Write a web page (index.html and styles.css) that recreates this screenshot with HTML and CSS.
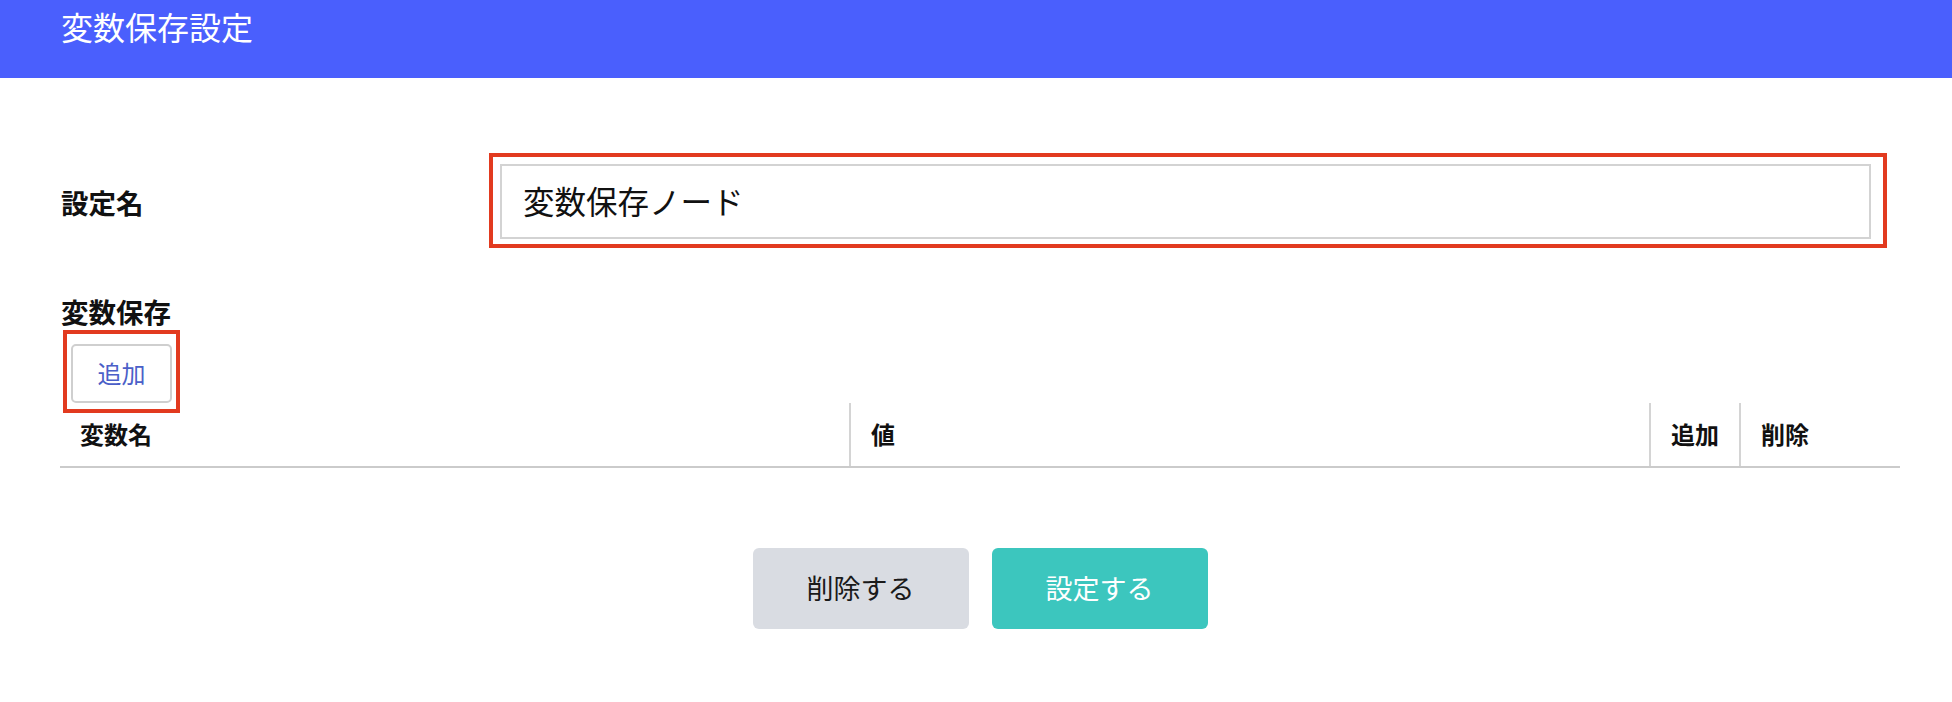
FILE: index.html
```html
<!DOCTYPE html>
<html lang="ja">
<head>
<meta charset="utf-8">
<title>変数保存設定</title>
<link rel="stylesheet" href="styles.css">
</head>
<body>
<header class="topbar">
  <h1 class="topbar-title">変数保存設定</h1>
</header>
<main class="content">
  <div class="field-row">
    <label class="field-label" for="name">設定名</label>
    <div class="annot annot-input">
      <input class="text-input" id="name" type="text" value="変数保存ノード">
    </div>
  </div>
  <h2 class="section-title">変数保存</h2>
  <div class="add-wrap">
    <button class="annot annot-btn add-btn" type="button">追加</button>
  </div>
  <table class="var-table">
    <colgroup>
      <col class="col-name">
      <col class="col-value">
      <col class="col-add">
      <col class="col-del">
    </colgroup>
    <thead>
      <tr>
        <th>変数名</th>
        <th>値</th>
        <th>追加</th>
        <th>削除</th>
      </tr>
    </thead>
    <tbody></tbody>
  </table>
  <div class="actions">
    <button class="btn btn-delete" type="button">削除する</button>
    <button class="btn btn-submit" type="button">設定する</button>
  </div>
</main>
</body>
</html>
```
FILE: styles.css
```css
* { box-sizing: border-box; }

html, body {
  margin: 0;
  padding: 0;
  background: #ffffff;
  font-family: "Noto Sans CJK JP", "Noto Sans", sans-serif;
  color: #111111;
}

.topbar {
  height: 78px;
  background: #4a5ffd;
  padding: 7px 0 0 61px;
}

.topbar-title {
  margin: 0;
  font-size: 32px;
  font-weight: 400;
  line-height: 38px;
  color: #ffffff;
}

.content {
  padding: 86px 52px 0 60px;
}

.field-row {
  display: flex;
  align-items: center;
}

.field-label {
  flex: 0 0 440px;
  padding-left: 1px;
  font-size: 27.5px;
  font-weight: 700;
  line-height: 36px;
  color: #111111;
}

.annot {
  position: relative;
}

.annot::after {
  content: "";
  position: absolute;
  border: 4px solid #e23a1f;
  pointer-events: none;
}

.annot-input {
  flex: 1;
  margin-right: 29px;
}

.annot-input::after {
  top: -11px;
  left: -11px;
  right: -16px;
  bottom: -9px;
}

.text-input {
  display: block;
  width: 100%;
  height: 75px;
  margin: 0;
  padding: 0 0 3px 21px;
  border: 2px solid #d3d3d3;
  border-radius: 0;
  background: #ffffff;
  font-family: inherit;
  font-size: 31.5px;
  color: #111111;
  outline: none;
}

.section-title {
  margin: 54px 0 0 1px;
  font-size: 27.5px;
  font-weight: 700;
  line-height: 36px;
  color: #111111;
}

.add-wrap {
  display: flex;
  padding: 15px 0 0 11px;
}

.add-btn {
  width: 101px;
  height: 59px;
  margin: 0;
  padding: 0 0 2px;
  border: 2px solid #cfcfcf;
  border-radius: 5px;
  background: #ffffff;
  font-family: inherit;
  font-size: 24px;
  color: #4b5fc8;
}

.annot-btn::after {
  top: -16px;
  left: -10px;
  right: -10px;
  bottom: -12px;
}

.var-table {
  width: 100%;
  border-collapse: collapse;
  table-layout: fixed;
}

.col-name { width: 790px; }
.col-value { width: 800px; }
.col-add { width: 90px; }
.col-del { width: 160px; }

.var-table th {
  height: 64px;
  padding: 0 0 2px 20px;
  text-align: left;
  font-size: 24px;
  font-weight: 700;
  line-height: 30px;
  color: #111111;
  border-bottom: 2px solid #cbcbcb;
}

.var-table th + th {
  border-left: 2px solid #d4d4d4;
}

.actions {
  display: flex;
  justify-content: center;
  gap: 23px;
  margin-top: 80px;
}

.btn {
  width: 216px;
  height: 81px;
  margin: 0;
  padding: 0 0 2px;
  border: none;
  border-radius: 6px;
  font-family: inherit;
  font-size: 27px;
  font-weight: 400;
}

.btn-delete {
  background: #d9dce2;
  color: #1a1a1a;
}

.btn-submit {
  background: #3cc6be;
  color: #ffffff;
}
```
